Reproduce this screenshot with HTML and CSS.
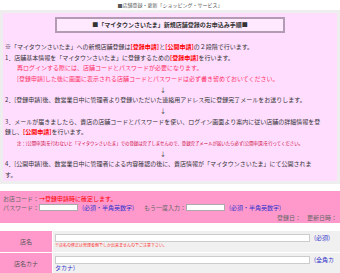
FILE: index.html
```html
<!DOCTYPE html>
<html lang="ja">
<head>
  <meta charset="UTF-8" />
  <meta name="viewport" content="width=device-width, initial-scale=1.0" />
  <title>店舗登録・更新</title>
  <link rel="stylesheet" href="styles.css">
</head>
<body>

  <p class="crumb">■店舗登録・更新「ショッピング・サービス」</p>

  <div class="frame">
    <div class="guide">
      <div class="guide-title">■「マイタウンさいたま」新規店舗登録のお申込み手順■</div>

      <p class="lead">※「マイタウンさいたま」への新規店舗登録は<b class="tag">[登録申請]</b>と<b class="tag">[公開申請]</b>の２段階で行います。</p>

      <p class="step">1．店舗基本情報を「マイタウンさいたま」に登録するための<b class="tag">[登録申請]</b>を行います。</p>
      <p class="step-note">再ログインする際には、店舗コードとパスワードが必要になります。<br>[登録申請]した後に画面に表示される店舗コードとパスワードは必ず書き留めておいてください。</p>
      <p class="down">↓</p>

      <p class="step">2．[登録申請]後、数営業日中に管理者より登録いただいた連絡用アドレス宛に登録完了メールをお送りします。</p>
      <p class="down">↓</p>

      <p class="step">3．メールが届きましたら、貴店の店舗コードとパスワードを使い、ログイン画面より案内に従い店舗の詳細情報を登<br>録し、<b class="tag">[公開申請]</b>を行います。</p>
      <p class="step-small">注：[公開申請]を行わないと「マイタウンさいたま」での登録は完了しませんので、登録完了メールが届いたら必ず[公開申請]を行ってください。</p>
      <p class="down">↓</p>

      <p class="step">4．[公開申請]後、数営業日中に管理者による内容確認の後に、貴店情報が「マイタウンさいたま」にて公開されま<br>す。</p>
    </div>
  </div>

  <form class="account">
    <div class="account-row">お店コード：<span class="fixed">→登録申請時に確定します。</span></div>
    <div class="account-row">
      パスワード：<input class="field-short" type="password"><span class="rule">(必須・半角英数字)</span>
      <span class="again">もう一度入力：</span><input class="field-short" type="password"><span class="rule">(必須・半角英数字)</span>
    </div>
    <div class="account-row dates">登録日：　更新日時：</div>
  </form>

  <div class="shop-table">
    <div class="shop-head">店名</div>
    <div class="shop-cell">
      <input class="field-long" type="text"><span class="rule">(必須)</span>
      <div class="cell-note">※店名の修正は管理者側でしか出来ませんのでご注意下さい。</div>
    </div>
    <div class="shop-head">店名カナ</div>
    <div class="shop-cell">
      <input class="field-long" type="text"><span class="rule">(全角カタカナ)</span>
    </div>
  </div>

</body>
</html>
```

FILE: styles.css
```css
html, body {
  margin: 0;
  padding: 0;
}

body {
  font-family: "Noto Sans CJK JP", "Noto Sans", sans-serif;
  font-size: 6px;
  color: #333;
  background: #fff;
  overflow: hidden;
}

p {
  margin: 0;
}

.crumb {
  height: 10px;
  line-height: 9px;
  font-size: 5px;
  color: #555;
  text-align: center;
}

/* 手順の説明枠 */
.frame {
  background: #eee;
  padding: 3px;
}

.guide {
  background: #ffddff;
  padding: 4px 2px 0;
  line-height: 10.67px;
}

.guide-title {
  width: 226px;
  margin: 0 auto 9px;
  border: 2px solid #b39bb3;
  background: #ffe9ff;
  line-height: 12px;
  font-weight: bold;
  text-align: center;
  color: #333;
}

.tag {
  color: #ff0000;
}

.step-note {
  padding-left: 12px;
  color: #ff3366;
}

.step-small {
  padding-left: 12px;
  font-size: 4.4px;
  color: #cc0033;
}

.down {
  text-align: center;
  padding-right: 14px;
}

/* アカウント入力 */
.account {
  margin: 7px 0 0;
  padding: 3px 3px 0;
  background: #ff99cc;
  color: #666;
  height: 29px;
}

.account-row {
  display: flex;
  align-items: center;
  height: 9.5px;
}

.fixed {
  color: #ff0000;
}

.rule {
  color: #3333cc;
  margin-left: 4px;
}

.again {
  margin-left: 10px;
}

.dates {
  justify-content: flex-end;
  height: 10px;
}

.field-short {
  width: 39px;
  height: 7px;
  box-sizing: border-box;
  margin: 0;
  padding: 0;
  border: 1px solid #aaa;
  background: #fff;
}

/* 店舗情報テーブル */
.shop-table {
  margin-top: 8px;
  display: grid;
  grid-template-columns: 52px 1fr;
  gap: 1px;
}

.shop-head {
  background: #ff99cc;
  color: #555;
  display: flex;
  align-items: center;
  justify-content: center;
  height: 21px;
}

.shop-cell {
  background: #f0f0f0;
  padding: 3px 2px 0;
  line-height: 8px;
  height: 18px;
}

.field-long {
  width: 255px;
  height: 8px;
  box-sizing: border-box;
  margin: 0;
  padding: 0;
  border: 1px solid #ccc;
  background: #fff;
  vertical-align: top;
}

.cell-note {
  font-size: 4px;
  color: #ff3333;
  line-height: 7px;
}
```
